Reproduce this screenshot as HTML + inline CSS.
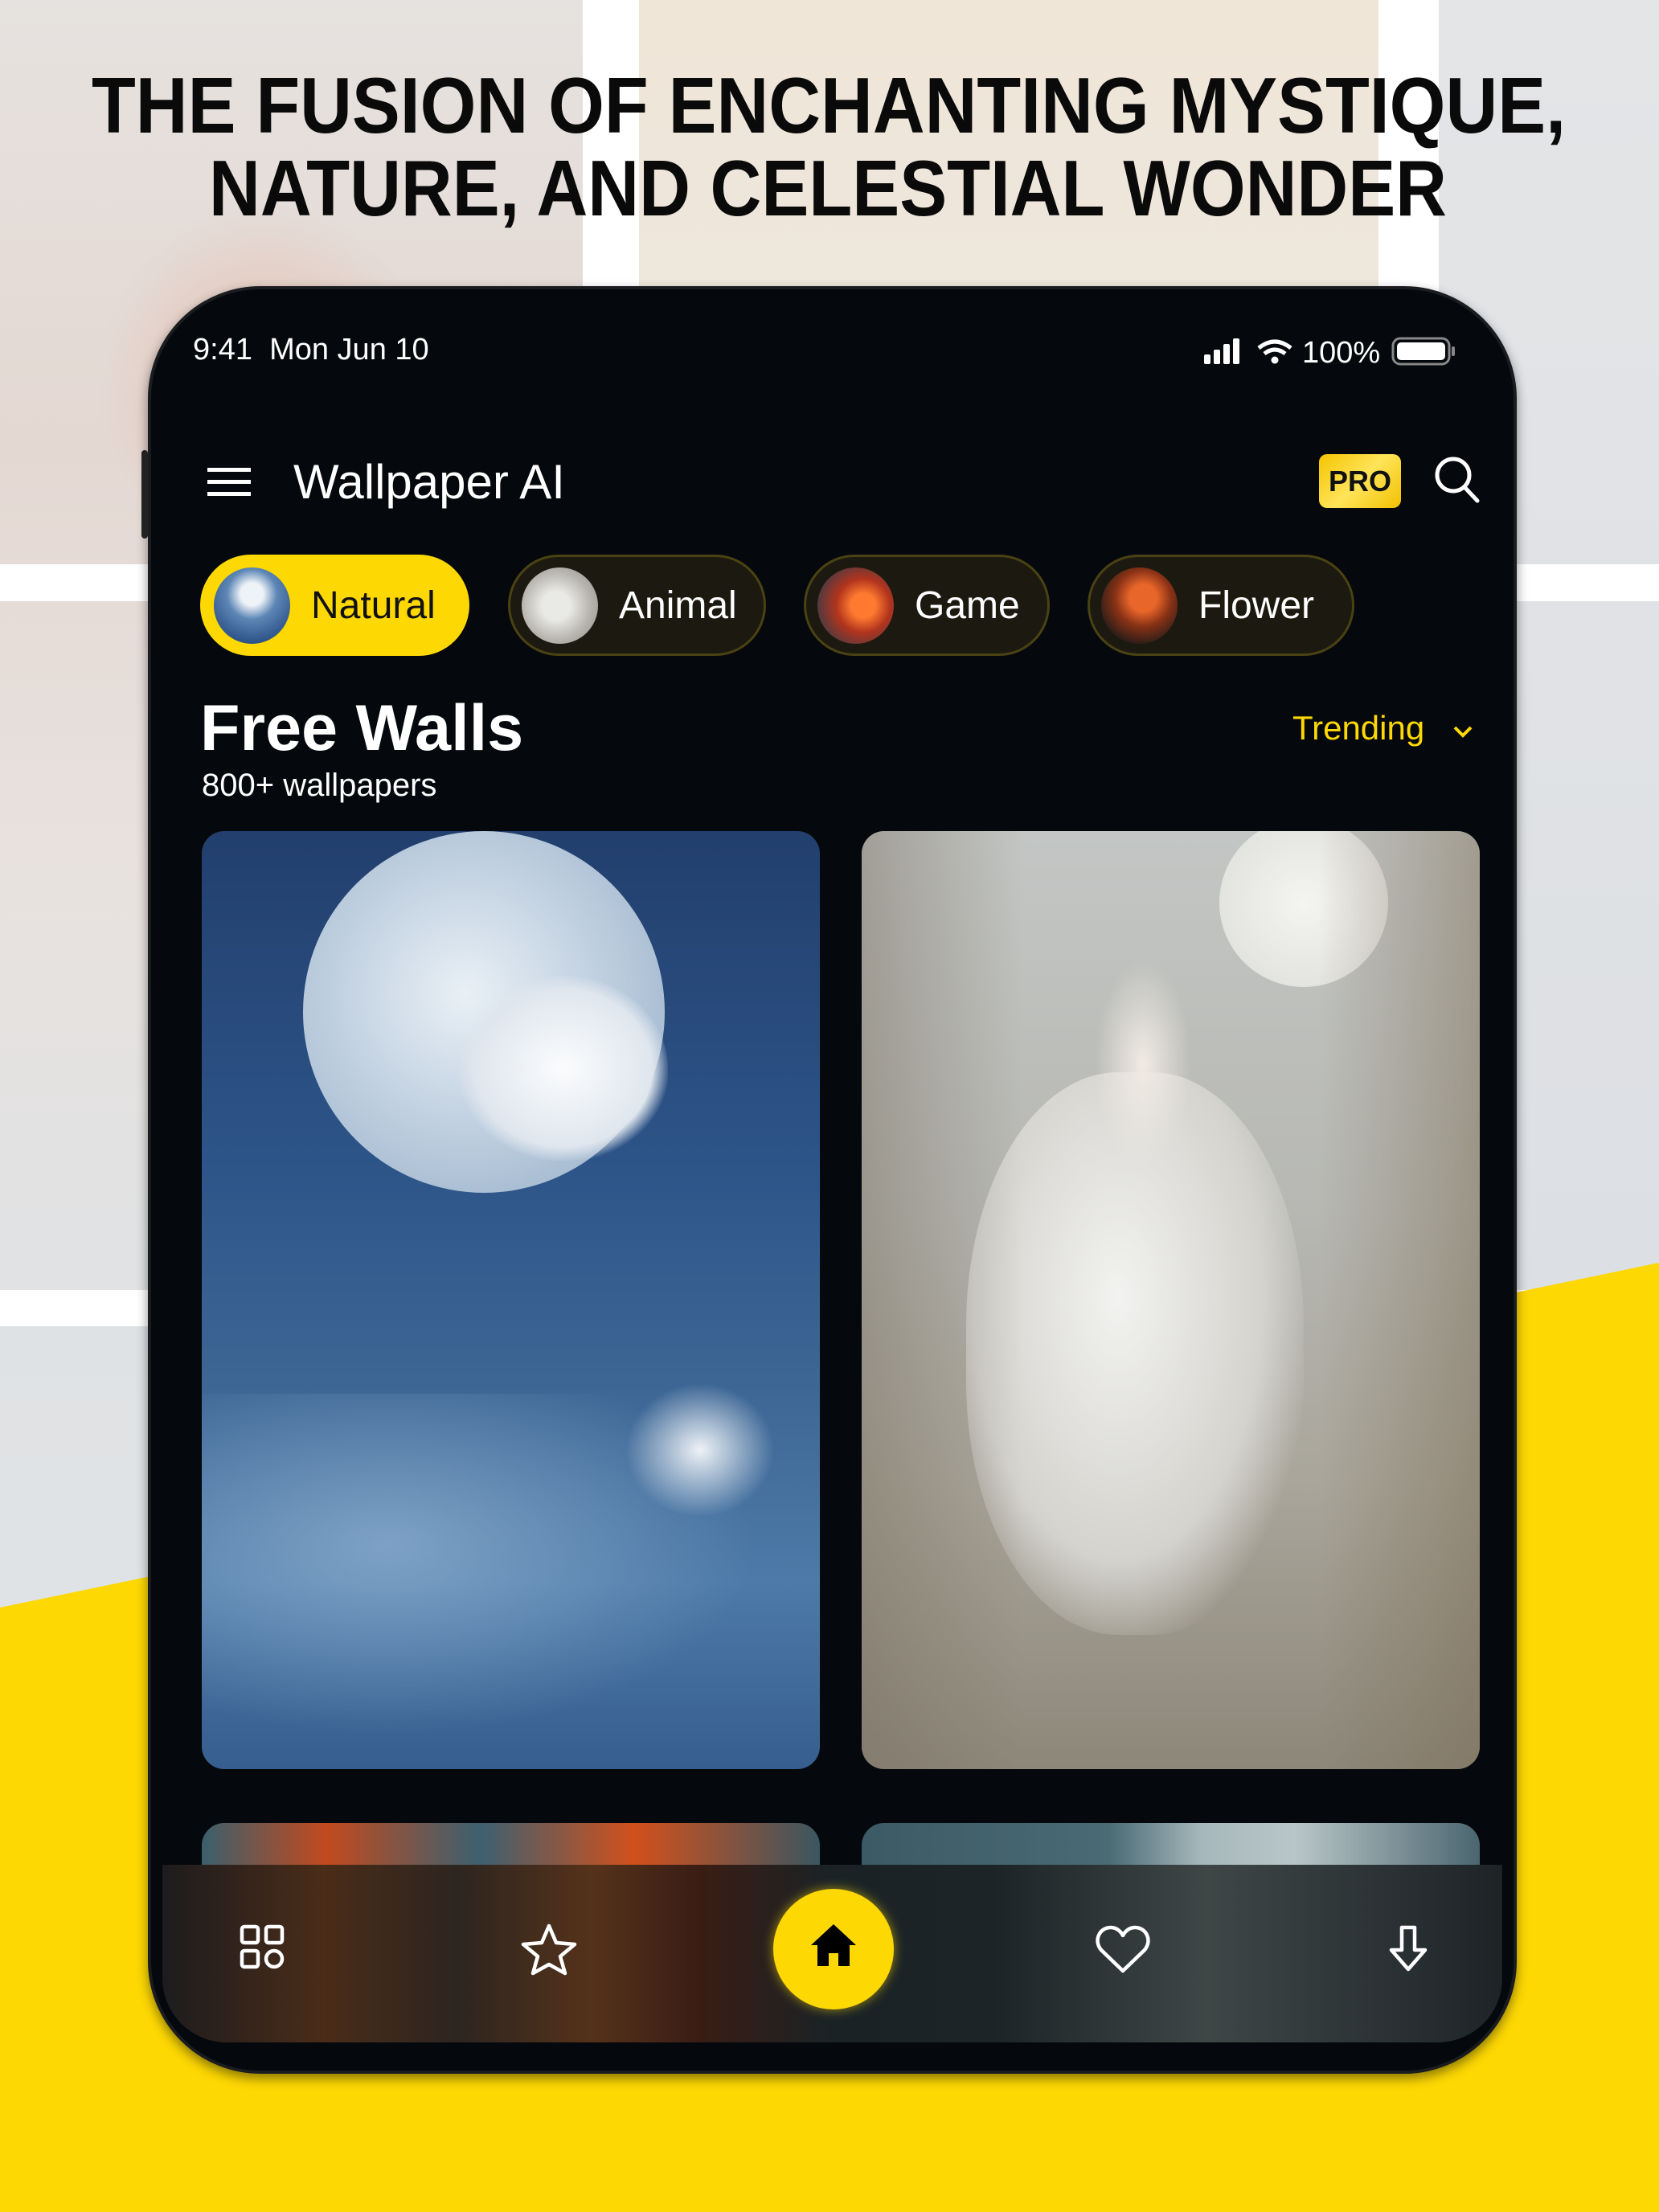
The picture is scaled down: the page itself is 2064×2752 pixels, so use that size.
<!DOCTYPE html>
<html><head><meta charset="utf-8"><style>
*{margin:0;padding:0;box-sizing:border-box}
body{width:2064px;height:2752px;position:relative;overflow:hidden;font-family:"Liberation Sans",sans-serif;background:#e9e9eb}
.abs{position:absolute}
.chip{position:absolute;top:690px;height:126px;border-radius:63px;border:3px solid #4a4213;background:#1c1a10;color:#fff;font-size:48px;display:flex;align-items:center}
.chip .av{width:95px;height:95px;border-radius:50%;margin-left:14px;margin-right:26px;flex:none}
.nav svg{position:absolute}
</style></head><body>
<div class="abs" style="left:0;top:0;width:725px;height:2752px;background:linear-gradient(180deg,#e6e2df 0%,#e4d8d2 20%,#e8e2df 40%,#dfe2e4 60%,#e4e6e8 100%)"></div>
<div class="abs" style="left:120px;top:250px;width:420px;height:450px;background:radial-gradient(ellipse at center,rgba(220,140,110,.35),rgba(230,220,215,0) 70%)"></div>
<div class="abs" style="left:725px;top:0;width:70px;height:2752px;background:#fff"></div>
<div class="abs" style="left:795px;top:0;width:920px;height:2752px;background:linear-gradient(180deg,#efe6d8,#ece8e2 40%,#e8e8ea)"></div>
<div class="abs" style="left:1715px;top:0;width:75px;height:2752px;background:#fff"></div>
<div class="abs" style="left:1790px;top:0;width:274px;height:2752px;background:linear-gradient(180deg,#e4e5e7,#dcdfe3 60%,#e0e4ea)"></div>
<div class="abs" style="left:0;top:702px;width:2064px;height:46px;background:#fff"></div>
<div class="abs" style="left:0;top:1605px;width:2064px;height:45px;background:#fff"></div>
<svg class="abs" style="left:0;top:0" width="2064" height="2752"><polygon points="0,2000 2064,1571 2064,2752 0,2752" fill="#fdd803"/></svg>
<svg class="abs" style="left:0;top:0" width="2064" height="300">
<text x="114" y="165" textLength="1834" lengthAdjust="spacingAndGlyphs" font-family="Liberation Sans" font-weight="bold" font-size="98" fill="#0a0a0a">THE FUSION OF ENCHANTING MYSTIQUE,</text>
<text x="260" y="268" textLength="1540" lengthAdjust="spacingAndGlyphs" font-family="Liberation Sans" font-weight="bold" font-size="98" fill="#0a0a0a">NATURE, AND CELESTIAL WONDER</text>
</svg>
<div class="abs" style="left:184px;top:356px;width:1703px;height:2224px;border-radius:140px;background:#05080c;box-shadow:0 6px 14px rgba(0,0,0,.45);border:4px solid #1a1c20"></div>
<div class="abs" style="left:176px;top:560px;width:8px;height:110px;background:#222;border-radius:4px"></div>
<div class="abs" style="left:240px;top:414px;color:#fff;font-size:38px">9:41&nbsp;&nbsp;Mon Jun 10</div>
<svg class="abs" style="left:1496px;top:415px" width="330" height="44">
<rect x="2" y="26" width="8" height="12" rx="2" fill="#fff"/><rect x="14" y="20" width="8" height="18" rx="2" fill="#fff"/><rect x="26" y="13" width="8" height="25" rx="2" fill="#fff"/><rect x="38" y="6" width="8" height="32" rx="2" fill="#fff"/>
<path d="M70 18 Q90 2 110 18" stroke="#fff" stroke-width="5" fill="none"/><path d="M77 25 Q90 15 103 25" stroke="#fff" stroke-width="5" fill="none"/><circle cx="90" cy="33" r="4.5" fill="#fff"/>
<text x="124" y="36" font-size="38" fill="#fff" font-family="Liberation Sans">100%</text>
<rect x="237" y="6" width="70" height="32" rx="9" stroke="#888" stroke-width="3" fill="none"/><rect x="242" y="11" width="60" height="22" rx="5" fill="#fff"/><rect x="310" y="16" width="4" height="12" rx="2" fill="#888"/>
</svg>
<svg class="abs" style="left:258px;top:580px" width="54" height="40"><rect y="2" width="54" height="5" fill="#fff"/><rect y="17" width="54" height="5" fill="#fff"/><rect y="32" width="54" height="5" fill="#fff"/></svg>
<div class="abs" style="left:365px;top:565px;color:#fff;font-size:60px">Wallpaper AI</div>
<div class="abs" style="left:1641px;top:565px;width:102px;height:67px;border-radius:10px;background:linear-gradient(135deg,#f5c400,#ffe45a 50%,#f2c000);color:#111;font-weight:bold;font-size:36px;display:flex;align-items:center;justify-content:center">PRO</div>
<svg class="abs" style="left:1782px;top:565px" width="62" height="64"><circle cx="26" cy="26" r="20" stroke="#fff" stroke-width="5" fill="none"/><line x1="40" y1="41" x2="56" y2="58" stroke="#fff" stroke-width="5" stroke-linecap="round"/></svg>
<div class="chip" style="left:249px;width:335px;background:#fdd803;border-color:#fdd803;color:#111"><div class="av" style="background:radial-gradient(circle at 50% 35%,#eef3f8 0 18%,#5d86b5 40%,#2a4f86 80%)"></div>Natural</div>
<div class="chip" style="left:632px;width:321px"><div class="av" style="background:radial-gradient(circle at 45% 50%,#e9e9e6 0 25%,#b7b5ae 60%,#8e8b82)"></div>Animal</div>
<div class="chip" style="left:1000px;width:306px"><div class="av" style="background:radial-gradient(circle at 60% 50%,#ff7a30 0 20%,#b2341d 45%,#3a3b48 85%)"></div>Game</div>
<div class="chip" style="left:1353px;width:332px"><div class="av" style="background:radial-gradient(circle at 55% 40%,#e8662a 0 22%,#8a3216 45%,#1c1a18 80%)"></div>Flower</div>
<div class="abs" style="left:249px;top:860px;color:#fff;font-size:81px;font-weight:bold">Free Walls</div>
<div class="abs" style="left:251px;top:955px;color:#fff;font-size:40px">800+ wallpapers</div>
<div class="abs" style="left:1608px;top:882px;color:#fdd803;font-size:42px">Trending</div>
<svg class="abs" style="left:1806px;top:900px" width="28" height="20"><path d="M4 5 L14 15 L24 5" stroke="#fdd803" stroke-width="4" fill="none"/></svg>
<div class="abs" style="left:251px;top:1034px;width:769px;height:1167px;border-radius:28px;overflow:hidden;background:linear-gradient(180deg,#223f6d 0%,#2d5488 35%,#3e6795 60%,#4d7aa8 80%,#365e8e 100%)">
 <div class="abs" style="left:126px;top:0;width:450px;height:450px;border-radius:50%;background:radial-gradient(circle at 45% 45%,#e9f0f6,#b5c7da 60%,#8fa9c5)"></div>
 <div class="abs" style="left:320px;top:180px;width:260px;height:230px;border-radius:50% 50% 40% 40%;background:radial-gradient(ellipse,#fbfcfd,#dfe6ee 60%,rgba(220,230,240,0) 72%)"></div>
 <div class="abs" style="left:0;top:700px;width:769px;height:467px;background:radial-gradient(ellipse at 30% 40%,rgba(160,190,220,.6),rgba(60,100,150,0) 60%)"></div>
 <div class="abs" style="left:520px;top:680px;width:200px;height:180px;background:radial-gradient(ellipse,#eef2f6,rgba(200,215,230,0) 65%)"></div>
</div>
<div class="abs" style="left:1072px;top:1034px;width:769px;height:1167px;border-radius:28px;overflow:hidden;background:linear-gradient(180deg,#c3c6c4 0%,#b7b8b3 40%,#a9a59a 70%,#8d877a 100%)">
 <div class="abs" style="left:445px;top:-16px;width:210px;height:210px;border-radius:50%;background:radial-gradient(circle,#f4f4f1,#dcdcd8)"></div>
 <div class="abs" style="left:130px;top:300px;width:420px;height:700px;border-radius:45%;background:radial-gradient(ellipse at 45% 40%,#f2f2f0,#d4d3ce 55%,rgba(180,178,170,0) 75%)"></div>
 <div class="abs" style="left:290px;top:160px;width:120px;height:260px;border-radius:50%;background:radial-gradient(ellipse,#f1ebe4,rgba(220,215,210,0) 70%)"></div>
 <div class="abs" style="left:0;top:0;width:200px;height:1167px;background:linear-gradient(90deg,rgba(120,110,95,.45),rgba(120,110,95,0))"></div>
 <div class="abs" style="right:0;top:0;width:200px;height:1167px;background:linear-gradient(270deg,rgba(120,105,80,.45),rgba(120,105,80,0))"></div>
</div>
<div class="abs" style="left:251px;top:2268px;width:769px;height:80px;border-radius:28px 28px 0 0;background:linear-gradient(90deg,#3a5f6d,#c24a1e 20%,#3c6070 45%,#d2501c 70%,#3a5660)"></div>
<div class="abs" style="left:1072px;top:2268px;width:769px;height:80px;border-radius:28px 28px 0 0;background:linear-gradient(90deg,#3c5a66,#4a6a74 40%,#a6b8bc 55%,#b9c6c8 70%,#4b6670)"></div>
<div class="abs nav" style="left:202px;top:2320px;width:1667px;height:221px;border-radius:0 0 80px 80px;background:linear-gradient(90deg,#1d1c1e 0%,#4a2c18 12%,#2d2520 22%,#55321a 32%,#3a1d14 40%,#1a2226 50%,#1c2427 62%,#3e4646 78%,#2a3134 92%,#1e2426 100%)">
 <svg style="left:96px;top:74px" width="56" height="56"><rect x="3" y="3" width="20" height="20" rx="3" stroke="#fff" stroke-width="4.5" fill="none"/><rect x="33" y="3" width="20" height="20" rx="3" stroke="#fff" stroke-width="4.5" fill="none"/><rect x="3" y="33" width="20" height="20" rx="3" stroke="#fff" stroke-width="4.5" fill="none"/><circle cx="43" cy="43" r="10" stroke="#fff" stroke-width="4.5" fill="none"/></svg>
 <svg style="left:446px;top:72px" width="70" height="66"><path d="M35 4 L44 25 L67 27 L49 42 L55 63 L35 52 L15 63 L21 42 L3 27 L26 25 Z" stroke="#fff" stroke-width="4.5" fill="none" stroke-linejoin="round"/></svg>
 <div class="abs" style="left:760px;top:30px;width:150px;height:150px;border-radius:50%;background:#fdd803;box-shadow:0 0 14px rgba(253,216,3,.6)"></div>
 <svg style="left:803px;top:70px" width="64" height="60"><path d="M32 4 L60 30 L52 30 L52 56 L38 56 L38 40 L26 40 L26 56 L12 56 L12 30 L4 30 Z" fill="#000"/></svg>
 <svg style="left:1160px;top:74px" width="70" height="62"><path d="M35 58 L8 32 C-2 20 6 4 20 4 C28 4 33 10 35 14 C37 10 42 4 50 4 C64 4 72 20 62 32 Z" stroke="#fff" stroke-width="4.5" fill="none" stroke-linejoin="round"/></svg>
 <svg style="left:1523px;top:74px" width="54" height="60"><path d="M19 4 L35 4 L35 32 L48 32 L27 56 L6 32 L19 32 Z" stroke="#fff" stroke-width="4.5" fill="none" stroke-linejoin="round"/></svg>
</div>
</body></html>
